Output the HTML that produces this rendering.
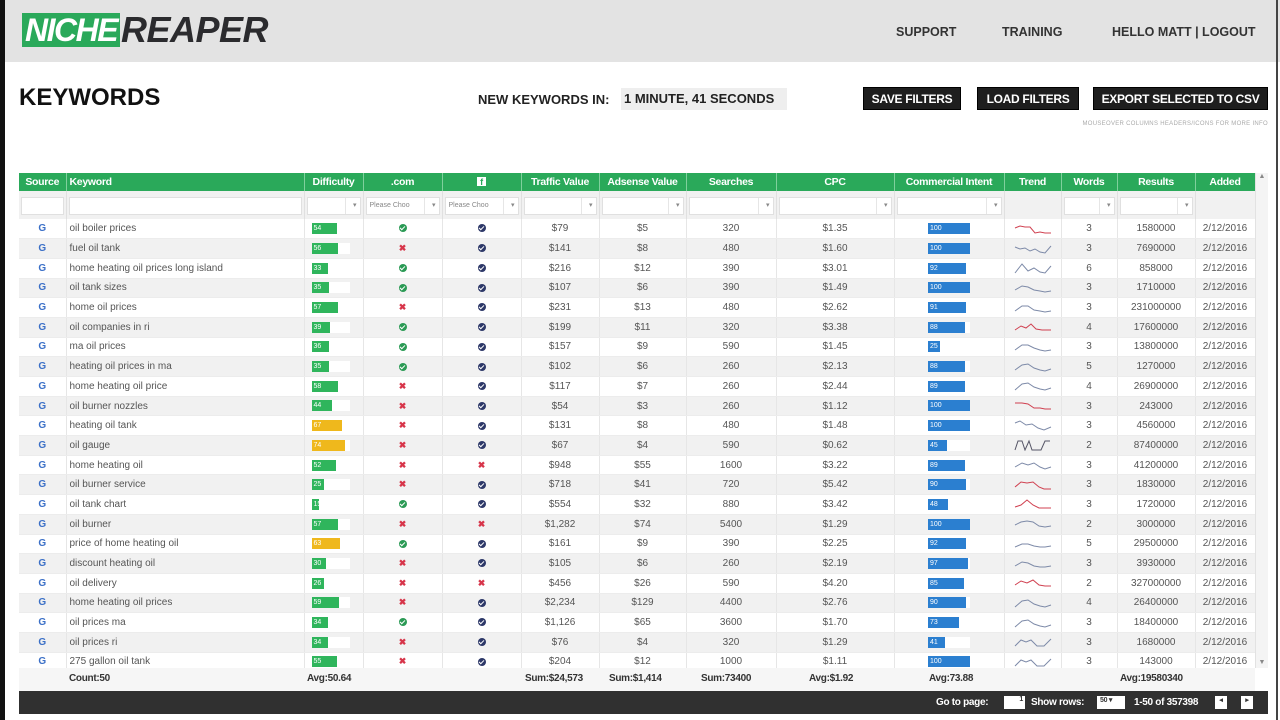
<!DOCTYPE html>
<html><head><meta charset="utf-8"><style>
*{margin:0;padding:0;box-sizing:border-box}
body{width:1280px;height:720px;overflow:hidden;background:#fff;font-family:"Liberation Sans",sans-serif;position:relative;color:#444}
.topbar{position:absolute;left:0;top:0;width:1280px;height:62px;background:#e3e3e3}
.lstrip{position:absolute;left:0;top:0;width:5px;height:720px;background:#111;z-index:5}
.rstrip{position:absolute;right:2px;top:0;width:2px;height:720px;background:#444;z-index:5}
.ln{position:absolute;left:22px;top:13px;width:98px;height:34px;background:#2aa95a;color:#fff;font-size:32px;font-weight:bold;font-style:italic;letter-spacing:-1.5px;line-height:35px;text-align:center;overflow:hidden}
.lr{position:absolute;left:121px;top:10px;color:#2b2b2e;font-size:36px;font-weight:bold;font-style:italic;line-height:40px;letter-spacing:-.5px}
.nav{position:absolute;top:25px;font-size:12.5px;font-weight:bold;color:#333}
h1{position:absolute;left:19px;top:84px;font-size:24px;font-weight:bold;color:#111}
.nk{position:absolute;left:478px;top:92px;font-size:13px;font-weight:bold;color:#222}
.nkv{position:absolute;left:621px;top:88px;width:166px;height:22px;background:#eee;font-size:13px;font-weight:bold;color:#222;line-height:22px;padding-left:3px}
.btn{position:absolute;top:87px;height:23px;background:#1e1e1e;color:#fff;font-size:12px;font-weight:bold;line-height:23px;text-align:center;border:1px solid #000;letter-spacing:-.3px}
.note{position:absolute;right:12px;top:121px;font-size:6px;color:#aaa;letter-spacing:.3px}
.tbl{position:absolute;left:19px;top:173px;width:1236px;height:495px;overflow:hidden}
table{border-collapse:collapse;table-layout:fixed;width:1236px;font-size:10px}
th{background:#2aa95a;color:#fff;font-weight:bold;height:18px;font-size:10.5px;letter-spacing:-.3px;border-right:1px solid #7fd09c;text-align:center;white-space:nowrap;overflow:hidden}
th.l{text-align:left;padding-left:3px}
.f td{height:28px;background:#f1f1f1;border-right:1px solid #e0e0e0;padding:3px 2px 2px}
.fi{height:18px;background:#fff;border:1px solid #e0e0e0;position:relative;font-size:7px;color:#888;line-height:16px;padding-left:3px;white-space:nowrap;overflow:hidden}
.fi.d:after{content:"▾";position:absolute;right:3px;top:0;font-size:7px;color:#888}
.fi.d:before{content:"";position:absolute;right:14px;top:0;height:16px;border-left:1px solid #e6e6e6}
tbody td{height:19.7px;border-right:1px solid #e6e6e6;border-bottom:1px solid #ececec;text-align:center;color:#555;white-space:nowrap;overflow:hidden}
tbody tr:nth-child(even) td{background:#f1f1f1}
td.k{text-align:left;padding-left:3px;color:#555}
.g{color:#3a6fc7;font-weight:bold;font-size:10px}
.db{display:inline-block;width:38px;height:11px;background:#fff;vertical-align:middle;text-align:left;margin-left:-6px}
.db i,.cb i{display:block;height:11px;font-style:normal;font-size:7px;color:#fff;line-height:11px;padding-left:2px}
.gr{background:#2fb55c}.yl{background:#efb81c}
.cb{display:inline-block;width:42px;height:11px;background:#fff;vertical-align:middle;text-align:left;margin-left:0}
.cb i{background:#2b7fd0}
.ok{display:inline-block;width:8px;height:8px;border-radius:50%;background:#2b9a55;vertical-align:middle;position:relative}
.ok:after{content:"";position:absolute;left:2px;top:1px;width:2px;height:4px;border:solid #fff;border-width:0 1.3px 1.3px 0;transform:rotate(45deg)}
.fb{background:#2d3868}
.x{color:#d7354a;font-size:9px;font-weight:bold}
svg{vertical-align:middle}
.foot{position:absolute;left:19px;top:668px;width:1236px;height:23px;background:#f6f6f6;font-size:10px;font-weight:bold;color:#333;letter-spacing:-.3px}
.foot span{position:absolute;top:5px}
.bar{position:absolute;left:19px;top:691px;width:1249px;height:23px;background:#303030;color:#fff;font-size:10px;font-weight:bold;letter-spacing:-.3px}
.bar span{position:absolute;top:6px}
.sb{position:absolute;left:1255px;top:173px;width:13px;height:495px;background:#f4f4f4;border-left:1px solid #e2e2e2}
</style></head><body>
<div class="topbar"></div><div class="lstrip"></div><div class="rstrip"></div>
<div class="ln">NICHE</div><div class="lr">REAPER</div>
<div class="nav" style="left:896px">SUPPORT</div>
<div class="nav" style="left:1002px">TRAINING</div>
<div class="nav" style="left:1112px">HELLO MATT | LOGOUT</div>
<h1>KEYWORDS</h1>
<div class="nk">NEW KEYWORDS IN:</div>
<div class="nkv">1 MINUTE, 41 SECONDS</div>
<div class="btn" style="left:863px;width:98px">SAVE FILTERS</div>
<div class="btn" style="left:977px;width:102px">LOAD FILTERS</div>
<div class="btn" style="left:1093px;width:175px">EXPORT SELECTED TO CSV</div>
<div class="note">MOUSEOVER COLUMNS HEADERS/ICONS FOR MORE INFO</div>
<div class="sb"><div style="font-size:7px;color:#888;text-align:center">▲</div><div style="position:absolute;bottom:2px;width:12px;font-size:7px;color:#888;text-align:center">▼</div></div>
<div class="tbl"><table>
<colgroup><col style="width:47px"><col style="width:238px"><col style="width:59px"><col style="width:79px"><col style="width:79px"><col style="width:78px"><col style="width:87px"><col style="width:90px"><col style="width:118px"><col style="width:110px"><col style="width:57px"><col style="width:56px"><col style="width:78px"><col style="width:60px"></colgroup>
<thead><tr><th>Source</th><th class="l">Keyword</th><th>Difficulty</th><th>.com</th><th><span style="display:inline-block;width:9px;height:9px;background:#fff;color:#2aa95a;font-size:9px;line-height:10px">f</span></th><th>Traffic Value</th><th>Adsense Value</th><th>Searches</th><th>CPC</th><th>Commercial Intent</th><th>Trend</th><th>Words</th><th>Results</th><th>Added</th></tr>
<tr class="f"><td><div class="fi"></div></td><td><div class="fi"></div></td><td><div class="fi d"></div></td><td><div class="fi d">Please Choo</div></td><td><div class="fi d">Please Choo</div></td><td><div class="fi d"></div></td><td><div class="fi d"></div></td><td><div class="fi d"></div></td><td><div class="fi d"></div></td><td><div class="fi d"></div></td><td></td><td><div class="fi d"></div></td><td><div class="fi d"></div></td><td></td></tr></thead>
<tbody>
<tr><td class="g">G</td><td class="k">oil boiler prices</td><td><span class="db"><i class="gr" style="width:25px">54</i></span></td><td><span class="ok"></span></td><td><span class="ok fb"></span></td><td>$79</td><td>$5</td><td>320</td><td>$1.35</td><td><span class="cb"><i style="width:42px">100</i></span></td><td><svg width="38" height="12"><polyline points="1,5 6,3 11,4 16,4 21,10 26,9 31,10 37,10" fill="none" stroke="#d04050" stroke-width="1"/></svg></td><td>3</td><td>1580000</td><td>2/12/2016</td></tr>
<tr><td class="g">G</td><td class="k">fuel oil tank</td><td><span class="db"><i class="gr" style="width:26px">56</i></span></td><td><span class="x">✖</span></td><td><span class="ok fb"></span></td><td>$141</td><td>$8</td><td>480</td><td>$1.60</td><td><span class="cb"><i style="width:42px">100</i></span></td><td><svg width="38" height="12"><polyline points="1,4 6,6 11,5 16,8 21,6 26,9 31,10 37,3" fill="none" stroke="#7d8aa8" stroke-width="1"/></svg></td><td>3</td><td>7690000</td><td>2/12/2016</td></tr>
<tr><td class="g">G</td><td class="k">home heating oil prices long island</td><td><span class="db"><i class="gr" style="width:16px">33</i></span></td><td><span class="ok"></span></td><td><span class="ok fb"></span></td><td>$216</td><td>$12</td><td>390</td><td>$3.01</td><td><span class="cb"><i style="width:38px">92</i></span></td><td><svg width="38" height="12"><polyline points="1,11 8,2 14,9 20,6 26,10 31,11 37,4" fill="none" stroke="#7d8aa8" stroke-width="1"/></svg></td><td>6</td><td>858000</td><td>2/12/2016</td></tr>
<tr><td class="g">G</td><td class="k">oil tank sizes</td><td><span class="db"><i class="gr" style="width:17px">35</i></span></td><td><span class="ok"></span></td><td><span class="ok fb"></span></td><td>$107</td><td>$6</td><td>390</td><td>$1.49</td><td><span class="cb"><i style="width:42px">100</i></span></td><td><svg width="38" height="12"><polyline points="1,8 8,4 14,5 20,8 26,9 31,10 37,9" fill="none" stroke="#7d8aa8" stroke-width="1"/></svg></td><td>3</td><td>1710000</td><td>2/12/2016</td></tr>
<tr><td class="g">G</td><td class="k">home oil prices</td><td><span class="db"><i class="gr" style="width:26px">57</i></span></td><td><span class="x">✖</span></td><td><span class="ok fb"></span></td><td>$231</td><td>$13</td><td>480</td><td>$2.62</td><td><span class="cb"><i style="width:38px">91</i></span></td><td><svg width="38" height="12"><polyline points="1,9 8,4 14,4 20,8 26,9 31,10 37,9" fill="none" stroke="#7d8aa8" stroke-width="1"/></svg></td><td>3</td><td>231000000</td><td>2/12/2016</td></tr>
<tr><td class="g">G</td><td class="k">oil companies in ri</td><td><span class="db"><i class="gr" style="width:18px">39</i></span></td><td><span class="ok"></span></td><td><span class="ok fb"></span></td><td>$199</td><td>$11</td><td>320</td><td>$3.38</td><td><span class="cb"><i style="width:37px">88</i></span></td><td><svg width="38" height="12"><polyline points="1,9 7,5 12,7 17,3 22,8 28,9 37,9" fill="none" stroke="#d04050" stroke-width="1"/></svg></td><td>4</td><td>17600000</td><td>2/12/2016</td></tr>
<tr><td class="g">G</td><td class="k">ma oil prices</td><td><span class="db"><i class="gr" style="width:17px">36</i></span></td><td><span class="ok"></span></td><td><span class="ok fb"></span></td><td>$157</td><td>$9</td><td>590</td><td>$1.45</td><td><span class="cb"><i style="width:12px">25</i></span></td><td><svg width="38" height="12"><polyline points="1,9 8,4 14,4 20,7 26,9 31,10 37,9" fill="none" stroke="#7d8aa8" stroke-width="1"/></svg></td><td>3</td><td>13800000</td><td>2/12/2016</td></tr>
<tr><td class="g">G</td><td class="k">heating oil prices in ma</td><td><span class="db"><i class="gr" style="width:17px">35</i></span></td><td><span class="ok"></span></td><td><span class="ok fb"></span></td><td>$102</td><td>$6</td><td>260</td><td>$2.13</td><td><span class="cb"><i style="width:37px">88</i></span></td><td><svg width="38" height="12"><polyline points="1,9 8,4 14,3 20,7 26,9 31,10 37,8" fill="none" stroke="#7d8aa8" stroke-width="1"/></svg></td><td>5</td><td>1270000</td><td>2/12/2016</td></tr>
<tr><td class="g">G</td><td class="k">home heating oil price</td><td><span class="db"><i class="gr" style="width:26px">58</i></span></td><td><span class="x">✖</span></td><td><span class="ok fb"></span></td><td>$117</td><td>$7</td><td>260</td><td>$2.44</td><td><span class="cb"><i style="width:37px">89</i></span></td><td><svg width="38" height="12"><polyline points="1,10 8,4 14,3 20,7 26,9 31,10 37,8" fill="none" stroke="#7d8aa8" stroke-width="1"/></svg></td><td>4</td><td>26900000</td><td>2/12/2016</td></tr>
<tr><td class="g">G</td><td class="k">oil burner nozzles</td><td><span class="db"><i class="gr" style="width:20px">44</i></span></td><td><span class="x">✖</span></td><td><span class="ok fb"></span></td><td>$54</td><td>$3</td><td>260</td><td>$1.12</td><td><span class="cb"><i style="width:42px">100</i></span></td><td><svg width="38" height="12"><polyline points="1,3 8,3 14,4 20,8 26,8 31,9 37,9" fill="none" stroke="#d04050" stroke-width="1"/></svg></td><td>3</td><td>243000</td><td>2/12/2016</td></tr>
<tr><td class="g">G</td><td class="k">heating oil tank</td><td><span class="db"><i class="yl" style="width:30px">67</i></span></td><td><span class="x">✖</span></td><td><span class="ok fb"></span></td><td>$131</td><td>$8</td><td>480</td><td>$1.48</td><td><span class="cb"><i style="width:42px">100</i></span></td><td><svg width="38" height="12"><polyline points="1,3 6,1 12,5 18,4 24,8 30,10 37,7" fill="none" stroke="#7d8aa8" stroke-width="1"/></svg></td><td>3</td><td>4560000</td><td>2/12/2016</td></tr>
<tr><td class="g">G</td><td class="k">oil gauge</td><td><span class="db"><i class="yl" style="width:33px">74</i></span></td><td><span class="x">✖</span></td><td><span class="ok fb"></span></td><td>$67</td><td>$4</td><td>590</td><td>$0.62</td><td><span class="cb"><i style="width:19px">45</i></span></td><td><svg width="38" height="12"><polyline points="1,11 4,2 8,2 11,11 15,2 18,11 27,11 31,2 36,2" fill="none" stroke="#556" stroke-width="1"/></svg></td><td>2</td><td>87400000</td><td>2/12/2016</td></tr>
<tr><td class="g">G</td><td class="k">home heating oil</td><td><span class="db"><i class="gr" style="width:24px">52</i></span></td><td><span class="x">✖</span></td><td><span class="x">✖</span></td><td>$948</td><td>$55</td><td>1600</td><td>$3.22</td><td><span class="cb"><i style="width:37px">89</i></span></td><td><svg width="38" height="12"><polyline points="1,8 8,4 14,6 20,4 26,8 31,10 37,8" fill="none" stroke="#7d8aa8" stroke-width="1"/></svg></td><td>3</td><td>41200000</td><td>2/12/2016</td></tr>
<tr><td class="g">G</td><td class="k">oil burner service</td><td><span class="db"><i class="gr" style="width:12px">25</i></span></td><td><span class="x">✖</span></td><td><span class="ok fb"></span></td><td>$718</td><td>$41</td><td>720</td><td>$5.42</td><td><span class="cb"><i style="width:38px">90</i></span></td><td><svg width="38" height="12"><polyline points="1,8 7,3 13,4 19,3 25,8 30,10 37,10" fill="none" stroke="#d04050" stroke-width="1"/></svg></td><td>3</td><td>1830000</td><td>2/12/2016</td></tr>
<tr><td class="g">G</td><td class="k">oil tank chart</td><td><span class="db"><i class="gr" style="width:7px">15</i></span></td><td><span class="ok"></span></td><td><span class="ok fb"></span></td><td>$554</td><td>$32</td><td>880</td><td>$3.42</td><td><span class="cb"><i style="width:20px">48</i></span></td><td><svg width="38" height="12"><polyline points="1,9 7,7 13,2 19,7 25,10 31,10 37,10" fill="none" stroke="#d04050" stroke-width="1"/></svg></td><td>3</td><td>1720000</td><td>2/12/2016</td></tr>
<tr><td class="g">G</td><td class="k">oil burner</td><td><span class="db"><i class="gr" style="width:26px">57</i></span></td><td><span class="x">✖</span></td><td><span class="x">✖</span></td><td>$1,282</td><td>$74</td><td>5400</td><td>$1.29</td><td><span class="cb"><i style="width:42px">100</i></span></td><td><svg width="38" height="12"><polyline points="1,7 7,4 13,3 19,4 25,8 31,9 37,8" fill="none" stroke="#7d8aa8" stroke-width="1"/></svg></td><td>2</td><td>3000000</td><td>2/12/2016</td></tr>
<tr><td class="g">G</td><td class="k">price of home heating oil</td><td><span class="db"><i class="yl" style="width:28px">63</i></span></td><td><span class="ok"></span></td><td><span class="ok fb"></span></td><td>$161</td><td>$9</td><td>390</td><td>$2.25</td><td><span class="cb"><i style="width:38px">92</i></span></td><td><svg width="38" height="12"><polyline points="1,9 8,6 14,6 20,8 26,9 31,9 37,8" fill="none" stroke="#7d8aa8" stroke-width="1"/></svg></td><td>5</td><td>29500000</td><td>2/12/2016</td></tr>
<tr><td class="g">G</td><td class="k">discount heating oil</td><td><span class="db"><i class="gr" style="width:14px">30</i></span></td><td><span class="x">✖</span></td><td><span class="ok fb"></span></td><td>$105</td><td>$6</td><td>260</td><td>$2.19</td><td><span class="cb"><i style="width:40px">97</i></span></td><td><svg width="38" height="12"><polyline points="1,8 8,4 14,5 20,8 26,9 31,9 37,8" fill="none" stroke="#7d8aa8" stroke-width="1"/></svg></td><td>3</td><td>3930000</td><td>2/12/2016</td></tr>
<tr><td class="g">G</td><td class="k">oil delivery</td><td><span class="db"><i class="gr" style="width:12px">26</i></span></td><td><span class="x">✖</span></td><td><span class="x">✖</span></td><td>$456</td><td>$26</td><td>590</td><td>$4.20</td><td><span class="cb"><i style="width:36px">85</i></span></td><td><svg width="38" height="12"><polyline points="1,8 7,4 13,6 19,3 25,8 31,9 37,9" fill="none" stroke="#d04050" stroke-width="1"/></svg></td><td>2</td><td>327000000</td><td>2/12/2016</td></tr>
<tr><td class="g">G</td><td class="k">home heating oil prices</td><td><span class="db"><i class="gr" style="width:27px">59</i></span></td><td><span class="x">✖</span></td><td><span class="ok fb"></span></td><td>$2,234</td><td>$129</td><td>4400</td><td>$2.76</td><td><span class="cb"><i style="width:38px">90</i></span></td><td><svg width="38" height="12"><polyline points="1,10 8,4 14,3 20,7 26,9 31,10 37,8" fill="none" stroke="#7d8aa8" stroke-width="1"/></svg></td><td>4</td><td>26400000</td><td>2/12/2016</td></tr>
<tr><td class="g">G</td><td class="k">oil prices ma</td><td><span class="db"><i class="gr" style="width:16px">34</i></span></td><td><span class="ok"></span></td><td><span class="ok fb"></span></td><td>$1,126</td><td>$65</td><td>3600</td><td>$1.70</td><td><span class="cb"><i style="width:31px">73</i></span></td><td><svg width="38" height="12"><polyline points="1,10 8,4 14,3 20,7 26,9 31,10 37,8" fill="none" stroke="#7d8aa8" stroke-width="1"/></svg></td><td>3</td><td>18400000</td><td>2/12/2016</td></tr>
<tr><td class="g">G</td><td class="k">oil prices ri</td><td><span class="db"><i class="gr" style="width:16px">34</i></span></td><td><span class="x">✖</span></td><td><span class="ok fb"></span></td><td>$76</td><td>$4</td><td>320</td><td>$1.29</td><td><span class="cb"><i style="width:17px">41</i></span></td><td><svg width="38" height="12"><polyline points="1,10 7,4 12,6 17,4 23,10 30,10 37,3" fill="none" stroke="#7d8aa8" stroke-width="1"/></svg></td><td>3</td><td>1680000</td><td>2/12/2016</td></tr>
<tr><td class="g">G</td><td class="k">275 gallon oil tank</td><td><span class="db"><i class="gr" style="width:25px">55</i></span></td><td><span class="x">✖</span></td><td><span class="ok fb"></span></td><td>$204</td><td>$12</td><td>1000</td><td>$1.11</td><td><span class="cb"><i style="width:42px">100</i></span></td><td><svg width="38" height="12"><polyline points="1,10 7,4 12,6 17,4 23,10 30,10 37,3" fill="none" stroke="#7d8aa8" stroke-width="1"/></svg></td><td>3</td><td>143000</td><td>2/12/2016</td></tr>
</tbody></table></div>
<div class="foot"><span style="left:50px">Count:50</span><span style="left:288px">Avg:50.64</span><span style="left:506px">Sum:$24,573</span><span style="left:590px">Sum:$1,414</span><span style="left:682px">Sum:73400</span><span style="left:790px">Avg:$1.92</span><span style="left:910px">Avg:73.88</span><span style="left:1101px">Avg:19580340</span></div>
<div class="bar"><span style="left:917px">Go to page:</span><span style="left:985px;top:5px;width:21px;height:13px;background:#fff;color:#333;font-size:7px;text-align:right;padding-right:2px">1</span><span style="left:1012px">Show rows:</span><span style="left:1078px;top:5px;width:28px;height:13px;background:#fff;color:#333;font-size:7px;padding-left:3px">50 ▾</span><span style="left:1115px">1-50 of 357398</span><span style="left:1196px;top:5px;width:12px;height:13px;background:#fff;color:#333;font-size:7px;text-align:center">◂</span><span style="left:1222px;top:5px;width:12px;height:13px;background:#fff;color:#333;font-size:7px;text-align:center">▸</span></div>
</body></html>
